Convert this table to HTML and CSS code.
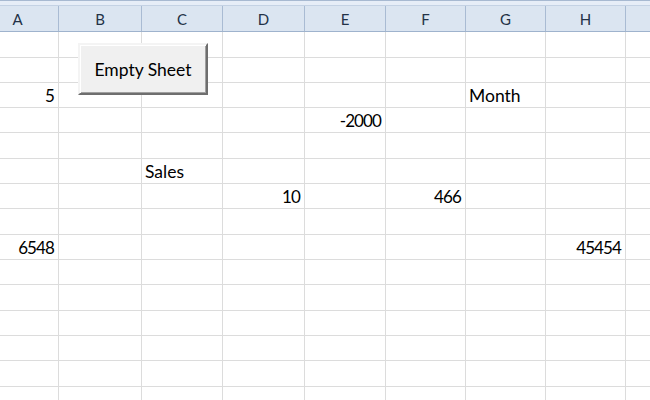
FILE: index.html
```html
<!DOCTYPE html>
<html>
<head>
<meta charset="utf-8">
<link rel="stylesheet" href="styles.css">
</head>
<body>
<div class="sheet">
  <div class="topband"></div>
  <div class="colheads">
    <div class="ch">A</div><div class="ch">B</div><div class="ch">C</div><div class="ch">D</div>
    <div class="ch">E</div><div class="ch">F</div><div class="ch">G</div><div class="ch">H</div><div class="ch"></div>
  </div>
  <div class="grid">
    <!-- row 1 -->
    <div class="c"></div><div class="c"></div><div class="c"></div><div class="c"></div><div class="c"></div><div class="c"></div><div class="c"></div><div class="c"></div><div class="c"></div>
    <!-- row 2 -->
    <div class="c"></div><div class="c"></div><div class="c"></div><div class="c"></div><div class="c"></div><div class="c"></div><div class="c"></div><div class="c"></div><div class="c"></div>
    <!-- row 3 -->
    <div class="c num">5</div><div class="c"></div><div class="c"></div><div class="c"></div><div class="c"></div><div class="c"></div><div class="c txt">Month</div><div class="c"></div><div class="c"></div>
    <!-- row 4 -->
    <div class="c"></div><div class="c"></div><div class="c"></div><div class="c"></div><div class="c num">-2000</div><div class="c"></div><div class="c"></div><div class="c"></div><div class="c"></div>
    <!-- row 5 -->
    <div class="c"></div><div class="c"></div><div class="c"></div><div class="c"></div><div class="c"></div><div class="c"></div><div class="c"></div><div class="c"></div><div class="c"></div>
    <!-- row 6 -->
    <div class="c"></div><div class="c"></div><div class="c txt">Sales</div><div class="c"></div><div class="c"></div><div class="c"></div><div class="c"></div><div class="c"></div><div class="c"></div>
    <!-- row 7 -->
    <div class="c"></div><div class="c"></div><div class="c"></div><div class="c num">10</div><div class="c"></div><div class="c num">466</div><div class="c"></div><div class="c"></div><div class="c"></div>
    <!-- row 8 -->
    <div class="c"></div><div class="c"></div><div class="c"></div><div class="c"></div><div class="c"></div><div class="c"></div><div class="c"></div><div class="c"></div><div class="c"></div>
    <!-- row 9 -->
    <div class="c num">6548</div><div class="c"></div><div class="c"></div><div class="c"></div><div class="c"></div><div class="c"></div><div class="c"></div><div class="c num">45454</div><div class="c"></div>
    <!-- rows 10-15 -->
    <div class="c"></div><div class="c"></div><div class="c"></div><div class="c"></div><div class="c"></div><div class="c"></div><div class="c"></div><div class="c"></div><div class="c"></div>
    <div class="c"></div><div class="c"></div><div class="c"></div><div class="c"></div><div class="c"></div><div class="c"></div><div class="c"></div><div class="c"></div><div class="c"></div>
    <div class="c"></div><div class="c"></div><div class="c"></div><div class="c"></div><div class="c"></div><div class="c"></div><div class="c"></div><div class="c"></div><div class="c"></div>
    <div class="c"></div><div class="c"></div><div class="c"></div><div class="c"></div><div class="c"></div><div class="c"></div><div class="c"></div><div class="c"></div><div class="c"></div>
    <div class="c"></div><div class="c"></div><div class="c"></div><div class="c"></div><div class="c"></div><div class="c"></div><div class="c"></div><div class="c"></div><div class="c"></div>
    <div class="c"></div><div class="c"></div><div class="c"></div><div class="c"></div><div class="c"></div><div class="c"></div><div class="c"></div><div class="c"></div><div class="c"></div>
  </div>
  <button class="btn">Empty Sheet</button>
</div>
</body>
</html>
```

FILE: styles.css
```css
* { box-sizing: border-box; }
html, body { margin: 0; padding: 0; background: #fff; }
body { width: 650px; height: 400px; overflow: hidden; }

.sheet {
  position: relative;
  width: 650px;
  height: 400px;
  overflow: hidden;
  font-family: Lato, "Liberation Sans", sans-serif;
}

.topband {
  height: 6px;
  background: #e6edf7;
  border-top: 1px solid #a7b9d1;
  border-bottom: 1px solid #c4d2e4;
}

.colheads,
.grid {
  display: grid;
  grid-template-columns: 82px 83px 81px 82px 81px 80px 80px 80px 100px;
  margin-left: -23px;
}

.colheads {
  height: 26px;
  background: #dbe5f1;
  border-bottom: 1px solid #9fb3cd;
}
.ch {
  border-right: 1px solid #a9bbd3;
  display: flex;
  align-items: center;
  justify-content: center;
  font-size: 15px;
  color: #233247;
  padding-top: 1px;
}

.grid {
  grid-template-rows: 26px 25px 25px 25px 26px 25px 25px 26px 25px 25px 26px 25px 25px 26px 25px;
}
.c {
  border-right: 1px solid #dcdcdc;
  border-bottom: 1px solid #dcdcdc;
  display: flex;
  align-items: flex-end;
  font-size: 17.5px;
  line-height: 1;
  color: #000;
  padding: 0 3px 3px 3px;
  white-space: nowrap;
}
.num {
  justify-content: flex-end;
  font-size: 17px;
  letter-spacing: -0.9px;
  padding-right: 4px;
}
.txt { justify-content: flex-start; }

.btn {
  position: absolute;
  left: 78px;
  top: 43px;
  width: 130px;
  height: 52px;
  margin: 0;
  padding: 0;
  background: #f0f0f0;
  border: 2px solid;
  border-color: #f4f4f4 #6e6e6e #6e6e6e #f4f4f4;
  box-shadow: inset 1px 1px 0 #ffffff, inset -1px -1px 0 #a0a0a0;
  font-family: Lato, "Liberation Sans", sans-serif;
  font-size: 17.5px;
  color: #000;
}
```
